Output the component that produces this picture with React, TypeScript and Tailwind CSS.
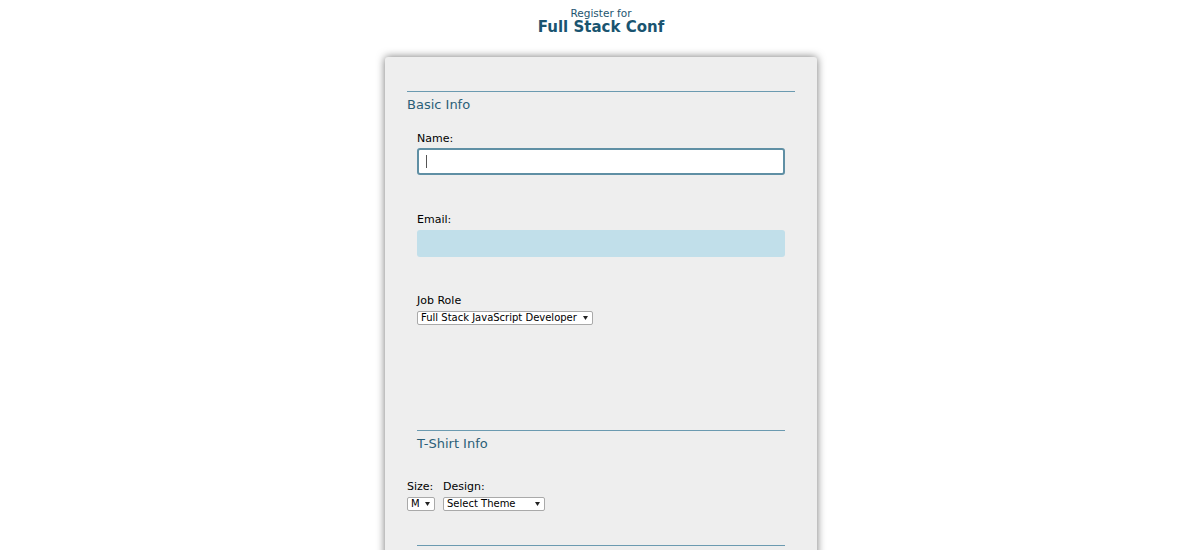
import React from "react";

const Caret = () => (
  <svg width="5" height="4" viewBox="0 0 5 4" className="shrink-0">
    <path d="M0 0 L5 0 L2.5 4 Z" fill="#222" />
  </svg>
);

function FakeSelect({ label, width }: { label: string; width: string }) {
  return (
    <div
      className={`flex items-center justify-between h-[14px] bg-white border border-[#a9a9a9] rounded-[2px] pl-[3px] pr-[4px] text-[10px] leading-none text-black whitespace-nowrap overflow-hidden ${width}`}
    >
      <span>{label}</span>
      <Caret />
    </div>
  );
}

export default function App() {
  return (
    <div
      className="min-h-[550px] bg-white overflow-hidden"
      style={{ fontFamily: '"DejaVu Sans", Verdana, sans-serif' }}
    >
      <header className="text-center pt-[8px] pl-[2px]">
        <div className="text-[10.5px] leading-[11px] text-[#1d5570]">Register for</div>
        <h1 className="text-[15px] leading-[17px] font-bold text-[#1a5470]">Full Stack Conf</h1>
      </header>
      <div className="flex justify-center pl-[2px]">
        <div className="mt-[21px] w-[432px] bg-[#eeeeee] rounded-[3px] shadow-[0_0_8px_rgba(0,0,0,0.55)] pt-[34px] pb-[40px]">
          <section className="mx-[22px] border-t border-[#6b9ab0]">
            <h2 className="text-[13px] leading-[15px] text-[#2b5f78] mt-[5px]">Basic Info</h2>
            <div className="px-[10px] mt-[20px]">
              <label className="block text-[11px] leading-[13px] text-black">Name:</label>
              <div className="mt-[3px] h-[27px] bg-white border-2 border-[#5f8fa4] rounded-[3px] flex items-center pl-[7px]">
                <div className="w-px h-[13px] bg-[#555]" />
              </div>
              <label className="block mt-[38px] text-[11px] leading-[13px] text-black">Email:</label>
              <div className="mt-[4px] h-[27px] bg-[#c1dfea] rounded-[3px]" />
              <label className="block mt-[37px] text-[11px] leading-[13px] text-black">Job Role</label>
              <div className="mt-[4px]">
                <FakeSelect label="Full Stack JavaScript Developer" width="w-[176px]" />
              </div>
            </div>
          </section>
          <section className="mx-[32px] mt-[105px] border-t border-[#6b9ab0]">
            <h2 className="text-[13px] leading-[15px] text-[#2b5f78] mt-[5px]">T-Shirt Info</h2>
          </section>
          <div className="mx-[22px] mt-[29px] flex gap-[8px]">
            <div className="flex flex-col">
              <label className="text-[11px] leading-[13px] text-black">Size:</label>
              <div className="mt-[4px]">
                <FakeSelect label="M" width="w-[28px]" />
              </div>
            </div>
            <div className="flex flex-col">
              <label className="text-[11px] leading-[13px] text-black">Design:</label>
              <div className="mt-[4px]">
                <FakeSelect label="Select Theme" width="w-[102px]" />
              </div>
            </div>
          </div>
          <section className="mx-[32px] mt-[34px] border-t border-[#6b9ab0] h-[40px]" />
        </div>
      </div>
    </div>
  );
}
